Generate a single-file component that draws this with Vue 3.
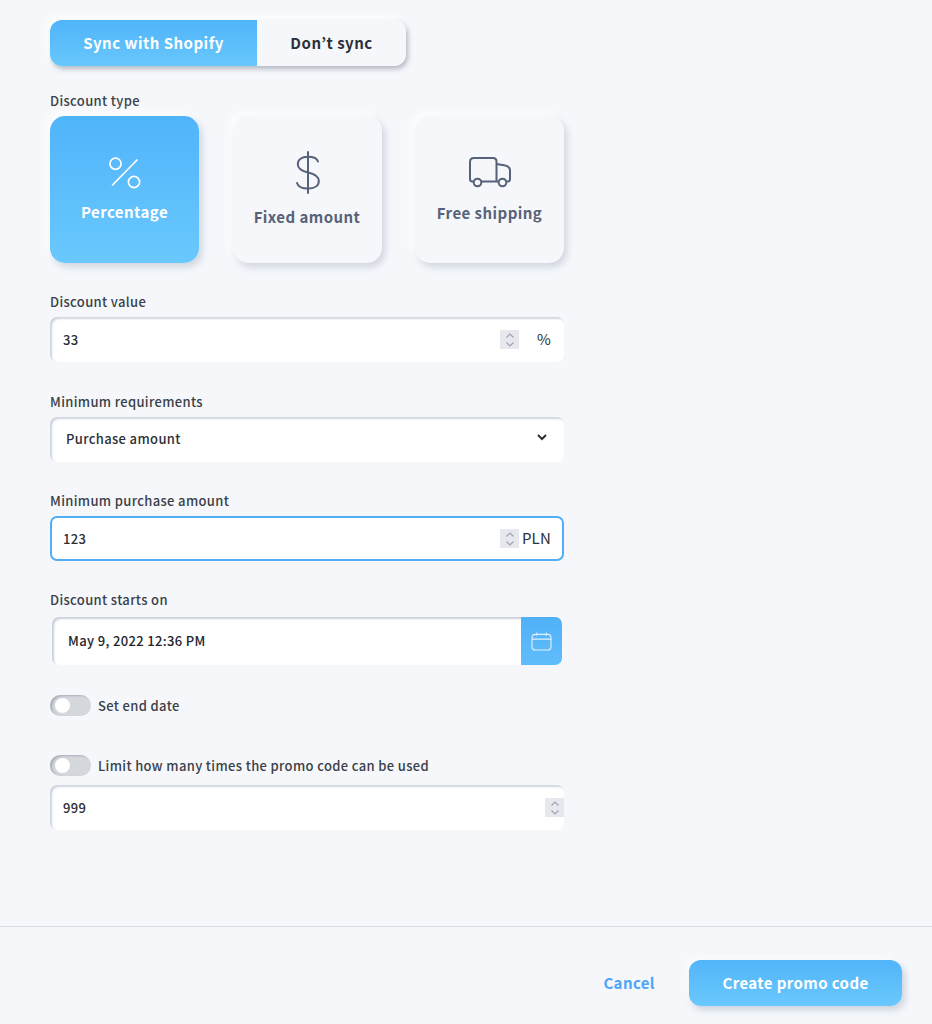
<script setup>
const discountTypes = [
  { key: 'percentage', label: 'Percentage', active: true },
  { key: 'fixed', label: 'Fixed amount' },
  { key: 'shipping', label: 'Free shipping' },
]
</script>

<template>
  <div class="page">
    <form class="form" @submit.prevent>
      <div class="sync-switch">
        <button type="button" class="sync-option sync-on">Sync with Shopify</button>
        <button type="button" class="sync-option sync-off">Don’t sync</button>
      </div>

      <div class="field-label type-label">Discount type</div>
      <div class="type-cards">
        <button
          v-for="type in discountTypes"
          :key="type.key"
          type="button"
          class="type-card"
          :class="[`type-${type.key}`, { 'type-active': type.active }]"
        >
          <svg v-if="type.key === 'percentage'" class="type-icon" width="36" height="36" viewBox="0 0 36 36" fill="none" stroke="currentColor" stroke-width="1.7">
            <circle cx="8.500" cy="8.700" r="5.600" />
            <circle cx="27" cy="27" r="5.600" />
            <path d="M30 5 5.500 30" stroke-linecap="round" />
          </svg>
          <svg v-else-if="type.key === 'fixed'" class="type-icon" width="26" height="44" viewBox="0 0 26 44" fill="none" stroke="currentColor" stroke-width="2" stroke-linecap="round">
            <path d="M13 1v41" />
            <path d="M23 10.500C22 7.500 18.500 5.800 13 5.800 6.500 5.800 2.800 8.700 2.800 13.200c0 4.800 4 6.800 10.200 8.200 6.500 1.500 10.800 3.500 10.800 8.500 0 4.800-4.300 7.700-10.800 7.700-5.800 0-9.800-1.900-11-5.600" />
          </svg>
          <svg v-else class="type-icon" width="42" height="32" viewBox="0 0 42 32" fill="none" stroke="currentColor" stroke-width="2">
            <path d="M5 24.500H3.500C2 24.500 1 23.500 1 22V5C1 2.500 2.500 1 5 1h19c2.500 0 3.500 1.500 3.500 3.500v20" />
            <path d="M12 24.500h17M27.500 7l7.500 1.200c3.500.6 6 2 6 5.300V22c0 1.500-1 2.500-2.500 2.500H38" />
            <circle cx="8.500" cy="25.500" r="3.800" />
            <circle cx="33.500" cy="25.500" r="3.800" />
          </svg>
          <span class="type-name">{{ type.label }}</span>
        </button>
      </div>

      <label class="field-label value-label">Discount value</label>
      <div class="input-box">
        <input class="input-text" value="33" />
        <span class="spinner">
          <svg width="10" height="16" viewBox="0 0 10 16" fill="none" stroke="currentColor" stroke-width="1.2"><path d="M1.500 5.500 5 2l3.500 3.500M1.500 10.500 5 14l3.500-3.500" /></svg>
        </span>
        <span class="unit">%</span>
      </div>

      <label class="field-label gap-label">Minimum requirements</label>
      <div class="input-box select-box">
        <span class="select-value">Purchase amount</span>
        <svg class="chevron" width="10" height="7" viewBox="0 0 10 7" fill="none" stroke="#2c3038" stroke-width="2"><path d="M1 1l4 4 4-4" /></svg>
      </div>

      <label class="field-label gap-label-tight">Minimum purchase amount</label>
      <div class="input-box input-focused">
        <input class="input-text" value="123" />
        <span class="spinner">
          <svg width="10" height="16" viewBox="0 0 10 16" fill="none" stroke="currentColor" stroke-width="1.2"><path d="M1.500 5.500 5 2l3.500 3.500M1.500 10.500 5 14l3.500-3.500" /></svg>
        </span>
        <span class="unit">PLN</span>
      </div>

      <label class="field-label gap-label-tight">Discount starts on</label>
      <div class="date-box">
        <span class="date-value">May 9, 2022 12:36 PM</span>
        <span class="date-btn">
          <svg width="21" height="19" viewBox="0 0 22 20" fill="none" stroke="#dff1ff" stroke-width="1.200">
            <rect x="1" y="2.500" width="20" height="16.500" rx="3.500" />
            <path d="M1 7.500h20M6 .5v3.500M16 .5v3.500" />
          </svg>
        </span>
      </div>

      <div class="toggle-row end-row">
        <span class="toggle"><span class="toggle-knob"></span></span>
        <span class="toggle-label">Set end date</span>
      </div>

      <div class="toggle-row limit-row">
        <span class="toggle"><span class="toggle-knob"></span></span>
        <span class="toggle-label">Limit how many times the promo code can be used</span>
      </div>

      <div class="input-box limit-box">
        <input class="input-text" value="999" />
        <span class="spinner">
          <svg width="10" height="16" viewBox="0 0 10 16" fill="none" stroke="currentColor" stroke-width="1.2"><path d="M1.500 5.500 5 2l3.500 3.500M1.500 10.500 5 14l3.500-3.500" /></svg>
        </span>
      </div>
    </form>

    <footer class="footer">
      <button type="button" class="cancel-btn">Cancel</button>
      <button type="button" class="create-btn">Create promo code</button>
    </footer>
  </div>
</template>

<style scoped>
.page {
  display: flex;
  flex-direction: column;
  height: 1024px;
  overflow: hidden;
  background: #f5f7fb;
  color: #2c3038;
  font-family: "Noto Sans CJK JP", "Noto Sans", sans-serif;
}

.form {
  display: flex;
  flex: 1;
  flex-direction: column;
  width: 514px;
  padding: 20px 0 0 50px;
}

button {
  border: 0;
  font-family: inherit;
  cursor: pointer;
}

.sync-switch {
  display: flex;
  width: 356px;
  height: 46px;
  border-radius: 12px;
  box-shadow: 2px 3px 5px rgba(90, 100, 120, 0.42), -4px -4px 8px rgba(255, 255, 255, 0.9);
  overflow: hidden;
}

.sync-option {
  padding: 0 0 2px;
  font-size: 15px;
  font-weight: 700;
  letter-spacing: 0.48px;
}

.sync-on {
  width: 207px;
  background: linear-gradient(180deg, #50b4f9, #68c7fc);
  color: #fff;
}

.sync-off {
  flex: 1;
  background: #f5f7fb;
  color: #2c3038;
}

.field-label {
  display: block;
  height: 20px;
  margin-bottom: 5px;
  color: #3a3f48;
  font-size: 13px;
  font-weight: 500;
  line-height: 19px;
  letter-spacing: 0.35px;
}

.type-label {
  margin-top: 25px;
  margin-bottom: 5px;
}

.type-cards {
  display: flex;
  gap: 33.500px;
}

.type-card {
  position: relative;
  flex-shrink: 0;
  width: 149px;
  height: 147px;
  border-radius: 15px;
  background: #f5f7fb;
  color: #566278;
  box-shadow: 3px 4px 7px rgba(110, 125, 150, 0.28), -4px -4px 8px rgba(255, 255, 255, 0.9);
}

.type-active {
  background: linear-gradient(180deg, #50b4fa, #69c8fd);
  color: #fff;
}

.type-icon {
  position: absolute;
}

.type-name {
  position: absolute;
  left: 0;
  right: 0;
  font-size: 15px;
  font-weight: 700;
  line-height: 20px;
  letter-spacing: 0.45px;
  text-align: center;
}

.type-percentage .type-icon {
  top: 39px;
  left: 57px;
}

.type-percentage .type-name {
  top: 86px;
}

.type-fixed .type-icon {
  top: 35px;
  left: 62px;
}

.type-fixed .type-name {
  top: 91px;
}

.type-shipping .type-icon {
  top: 41px;
  left: 54px;
}

.type-shipping .type-name {
  top: 87px;
}

.value-label {
  margin-top: 29px;
}

.gap-label {
  margin-top: 30px;
}

.gap-label-tight {
  margin-top: 29px;
}

.input-box {
  display: flex;
  align-items: center;
  box-sizing: border-box;
  height: 45px;
  padding-right: 13px;
  border-radius: 7px;
  background: #fff;
  box-shadow: inset 2px 2px 2px rgba(165, 178, 195, 0.55);
}

.input-text {
  flex: 1;
  min-width: 0;
  padding: 0 0 1px 13px;
  border: 0;
  outline: 0;
  background: transparent;
  color: #2c3038;
  font-family: inherit;
  font-size: 13px;
  font-weight: 500;
  letter-spacing: 0.35px;
}

.spinner {
  display: flex;
  align-items: center;
  justify-content: center;
  width: 19px;
  height: 19px;
  background: #e6e8ed;
  color: #9ea3ad;
}

.unit {
  width: 32px;
  padding-bottom: 2px;
  color: #2c3038;
  font-size: 15px;
  letter-spacing: 0.2px;
  text-align: right;
}

.select-box {
  justify-content: space-between;
  padding: 0 17px 2px 16px;
}

.select-value {
  color: #2c3038;
  font-size: 13px;
  font-weight: 500;
  letter-spacing: 0.35px;
}

.chevron {
  margin-top: -2px;
}

.input-focused {
  padding-right: 11px;
  border: 2px solid #53aef6;
  box-shadow: none;
}

.input-focused .input-text {
  padding-left: 11px;
}

.date-box {
  display: flex;
  align-items: stretch;
  box-sizing: border-box;
  height: 48px;
  margin: 2px 2px 0 2px;
  border-radius: 7px;
  background: #fff;
  box-shadow: inset 2px 2px 2px rgba(165, 178, 195, 0.6);
  overflow: hidden;
}

.date-value {
  flex: 1;
  padding-left: 16px;
  color: #23262c;
  font-size: 13px;
  font-weight: 500;
  line-height: 47px;
  letter-spacing: 0.35px;
}

.date-btn {
  display: flex;
  align-items: center;
  justify-content: center;
  width: 41px;
  background: linear-gradient(180deg, #50b1f8, #60bdfa);
}

.toggle-row {
  display: flex;
  align-items: center;
  gap: 7px;
  height: 21px;
}

.end-row {
  margin-top: 30px;
}

.limit-row {
  margin-top: 39px;
}

.toggle {
  display: block;
  position: relative;
  flex-shrink: 0;
  width: 41px;
  height: 21px;
  border-radius: 11px;
  background: #d4d7dc;
  box-shadow: inset 2px 1px 2px rgba(140, 150, 165, 0.6);
}

.toggle-knob {
  position: absolute;
  top: 3px;
  left: 5px;
  width: 15px;
  height: 15px;
  border-radius: 50%;
  background: #fff;
}

.toggle-label {
  margin-top: -1px;
  color: #3a3f48;
  font-size: 13px;
  font-weight: 500;
  letter-spacing: 0.35px;
}

.limit-box {
  margin-top: 9px;
  padding-right: 0;
}

.footer {
  display: flex;
  align-items: center;
  justify-content: flex-end;
  flex-shrink: 0;
  box-sizing: border-box;
  height: 98px;
  padding: 15px 30px 0 0;
  border-top: 1px solid #d8dadf;
}

.cancel-btn {
  margin-right: 34px;
  padding: 0 0 2px;
  background: none;
  color: #4da5f5;
  font-size: 15px;
  font-weight: 700;
  letter-spacing: 0.4px;
}

.create-btn {
  width: 213px;
  height: 46px;
  padding: 0 0 2px;
  border-radius: 12px;
  background: linear-gradient(180deg, #52b5f9, #69c8fd);
  color: #fff;
  font-size: 15px;
  font-weight: 700;
  letter-spacing: 0.4px;
  box-shadow: 3px 4px 7px rgba(110, 125, 150, 0.3), -3px -3px 6px rgba(255, 255, 255, 0.8);
}
</style>
